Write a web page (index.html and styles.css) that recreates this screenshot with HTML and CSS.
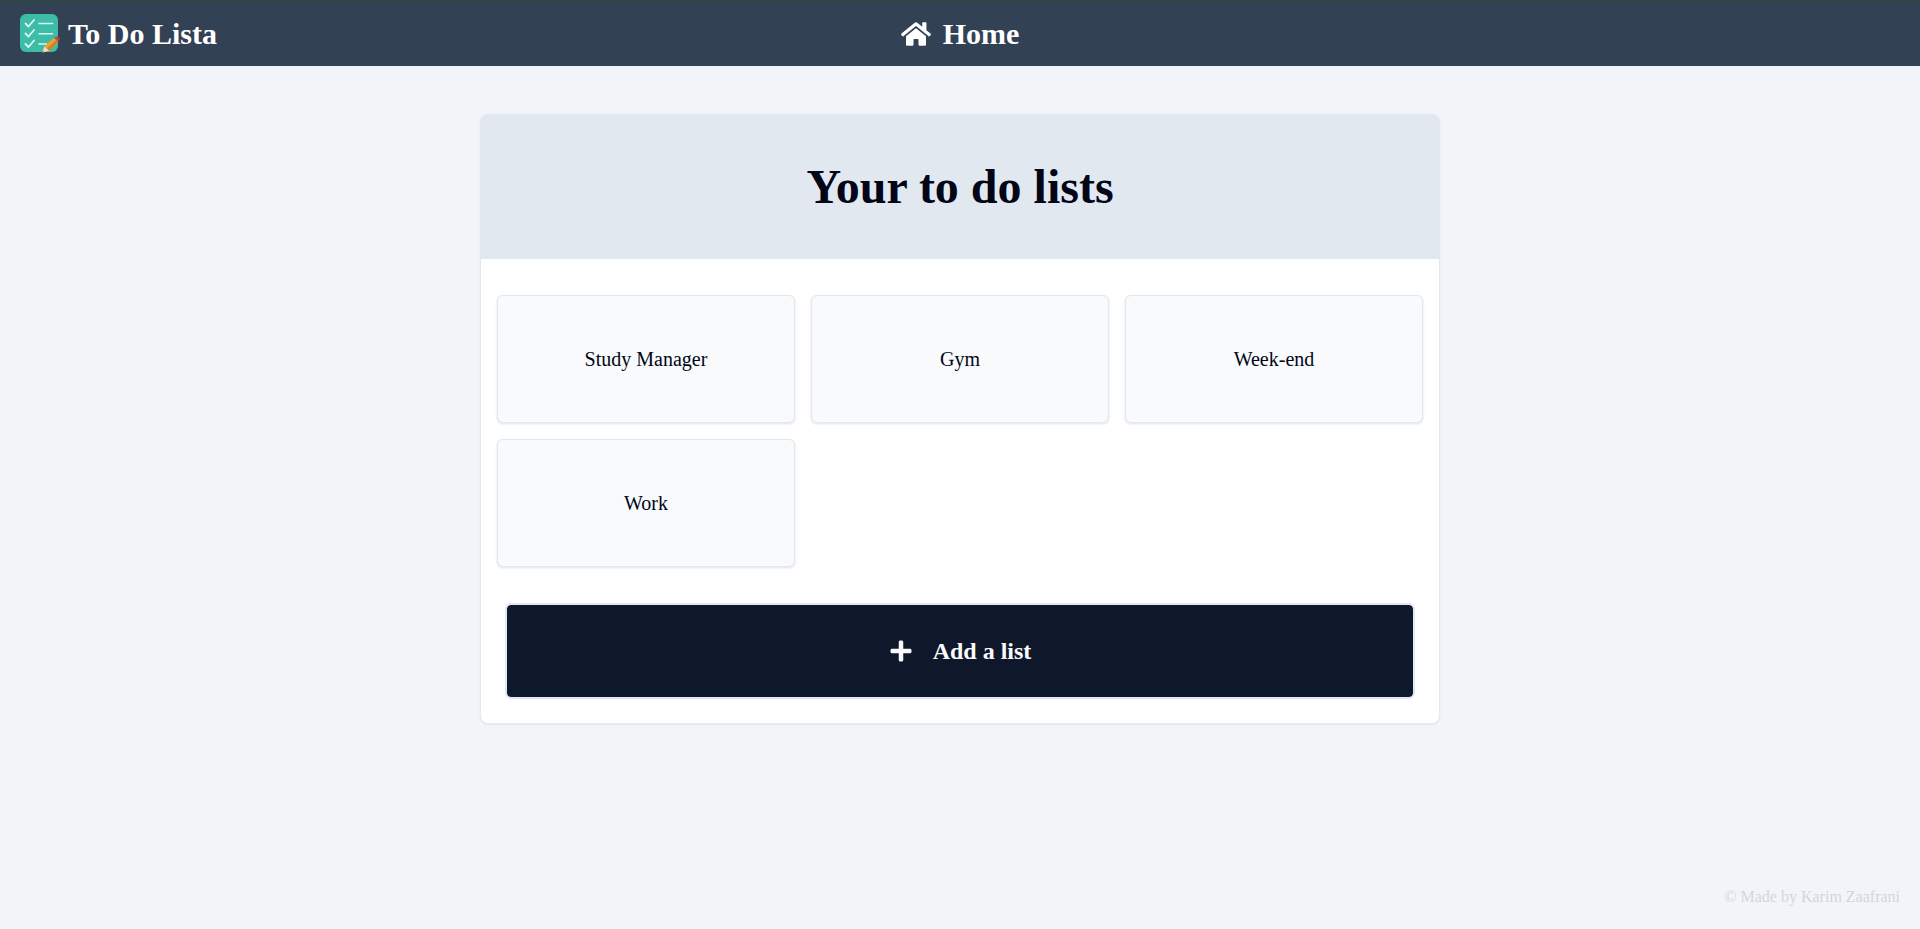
FILE: index.html
```html
<!DOCTYPE html>
<html lang="en">
<head>
<meta charset="utf-8">
<title>To Do Lista</title>
<link rel="stylesheet" href="styles.css">
</head>
<body>
<header class="navbar">
  <div class="brand">
    <svg class="brand-logo" viewBox="0 0 40 40" aria-hidden="true">
      <rect x="0" y="0" width="38" height="38" rx="6" fill="#3dbda7"/>
      <g fill="none" stroke="#dcf8f3" stroke-linecap="round" stroke-linejoin="round">
        <path stroke-width="1.800" d="M5.500 9.500l3 3 5.500-6.500M5.500 19.500l3 3 5.500-6.500M5.500 30l3 3 5.500-6.500"/>
        <path stroke-width="1.600" d="M19 9.500h13.500M19 19.700h13.500M19 30h8"/>
      </g>
      <path d="M22 38.800l2.500-6.500 4.800 4.500z" fill="#f3d9b4"/>
      <path d="M24.500 32.300l9.500-8.500 4 4.300-8.700 8.700z" fill="#f0a02c"/>
      <path d="M27 34.600l9.200-8.600 1.800 2.100-8.700 8.700z" fill="#d97c25"/>
      <path d="M34 23.800l1.300-1.100 3.800 4.200-1.100 1.200z" fill="#a9584a"/>
      <path d="M35.300 22.700q2.200-.8 3.700.8 1.500 1.800.1 3.400z" fill="#c43c30"/>
      <path d="M22 38.800l.7-1.900 1.300 1.200z" fill="#5b4a42"/>
    </svg>
    <span>To Do Lista</span>
  </div>
  <nav>
    <a class="nav-link" href="#">
      <svg class="home-icon" viewBox="0 0 576 512" aria-hidden="true"><path fill="currentColor" d="M280.370 148.260L96 300.110V464a16 16 0 0 0 16 16l112.060-.29a16 16 0 0 0 15.920-16V368a16 16 0 0 1 16-16h64a16 16 0 0 1 16 16v95.640a16 16 0 0 0 16 16.050L464 480a16 16 0 0 0 16-16V300L295.670 148.260a12.190 12.190 0 0 0-15.300 0zM571.600 251.470L488 182.560V44.050a12 12 0 0 0-12-12h-56a12 12 0 0 0-12 12v72.610L318.470 43a48 48 0 0 0-61 0L4.340 251.470a12 12 0 0 0-1.600 16.900l25.500 31A12 12 0 0 0 45.150 301l235.220-193.740a12.190 12.190 0 0 1 15.300 0L530.900 301a12 12 0 0 0 16.900-1.600l25.500-31a12 12 0 0 0-1.700-16.930z"/></svg>
      <span>Home</span>
    </a>
  </nav>
</header>
<main class="panel">
  <h1 class="panel-title">Your to do lists</h1>
  <div class="lists">
    <a class="list-card" href="#">Study Manager</a>
    <a class="list-card" href="#">Gym</a>
    <a class="list-card" href="#">Week-end</a>
    <a class="list-card" href="#">Work</a>
  </div>
  <button class="add-button" type="button">
    <svg class="plus-icon" viewBox="0 0 448 512" aria-hidden="true"><path fill="currentColor" d="M416 208H272V64c0-17.670-14.330-32-32-32h-32c-17.670 0-32 14.330-32 32v144H32c-17.670 0-32 14.330-32 32v32c0 17.670 14.330 32 32 32h144v144c0 17.670 14.330 32 32 32h32c17.670 0 32-14.330 32-32V304h144c17.670 0 32-14.330 32-32v-32c0-17.670-14.330-32-32-32z"/></svg>
    <span>Add a list</span>
  </button>
</main>
<footer class="footer">© Made by Karim Zaafrani</footer>
</body>
</html>
```
FILE: styles.css
```css
* {
  box-sizing: border-box;
}

body {
  margin: 0;
  min-height: 100vh;
  display: flex;
  flex-direction: column;
  background: #f1f5f9;
  color: #020617;
  font-family: "Liberation Serif", "Times New Roman", serif;
  font-size: 16px;
  line-height: 24px;
}

a {
  color: inherit;
  text-decoration: none;
}

.navbar {
  display: grid;
  grid-template-columns: 1fr auto 1fr;
  align-items: center;
  padding: 13px 20px 12px;
  border-top: 1px solid #2b4a3c;
  background: #334155;
  color: #ffffff;
  font-size: 30px;
  font-weight: 700;
  line-height: 36px;
}

.brand {
  display: flex;
  align-items: center;
  gap: 8px;
}

.brand-logo {
  width: 40px;
  height: 40px;
}

.nav-link {
  display: flex;
  align-items: center;
  gap: 12px;
}

.home-icon {
  width: 30px;
  height: 28px;
}

.panel {
  width: 50%;
  margin: 48px auto 0;
  border: 1px solid #e2e8f0;
  border-radius: 8px;
  background: #ffffff;
  box-shadow: 0 1px 2px rgba(0, 0, 0, 0.05);
}

.panel-title {
  margin: 0;
  padding: 48px;
  border-radius: 6px 6px 0 0;
  background: #e2e8f0;
  font-size: 48px;
  font-weight: 700;
  line-height: 48px;
  text-align: center;
}

.lists {
  display: grid;
  grid-template-columns: repeat(3, 1fr);
  gap: 16px;
  padding: 36px 16px 12px;
}

.list-card {
  display: flex;
  align-items: center;
  justify-content: center;
  min-height: 128px;
  border: 1px solid #e2e8f0;
  border-radius: 6px;
  background: #f8fafc;
  box-shadow: 0 1px 3px rgba(226, 232, 240, 1), 0 1px 2px rgba(0, 0, 0, 0.06);
  font-size: 20px;
  line-height: 28px;
}

.add-button {
  display: flex;
  align-items: center;
  justify-content: center;
  gap: 20px;
  width: calc(100% - 48px);
  min-height: 96px;
  margin: 24px;
  border: 2px solid #e2e8f0;
  border-radius: 6px;
  background: #0f172a;
  background-clip: padding-box;
  color: #f8fafc;
  font-family: inherit;
  font-size: 24px;
  font-weight: 700;
  line-height: 32px;
}

.plus-icon {
  width: 24px;
  height: 24px;
}

.footer {
  margin-top: auto;
  padding: 20px;
  color: #d1d5db;
  text-align: right;
}
```
